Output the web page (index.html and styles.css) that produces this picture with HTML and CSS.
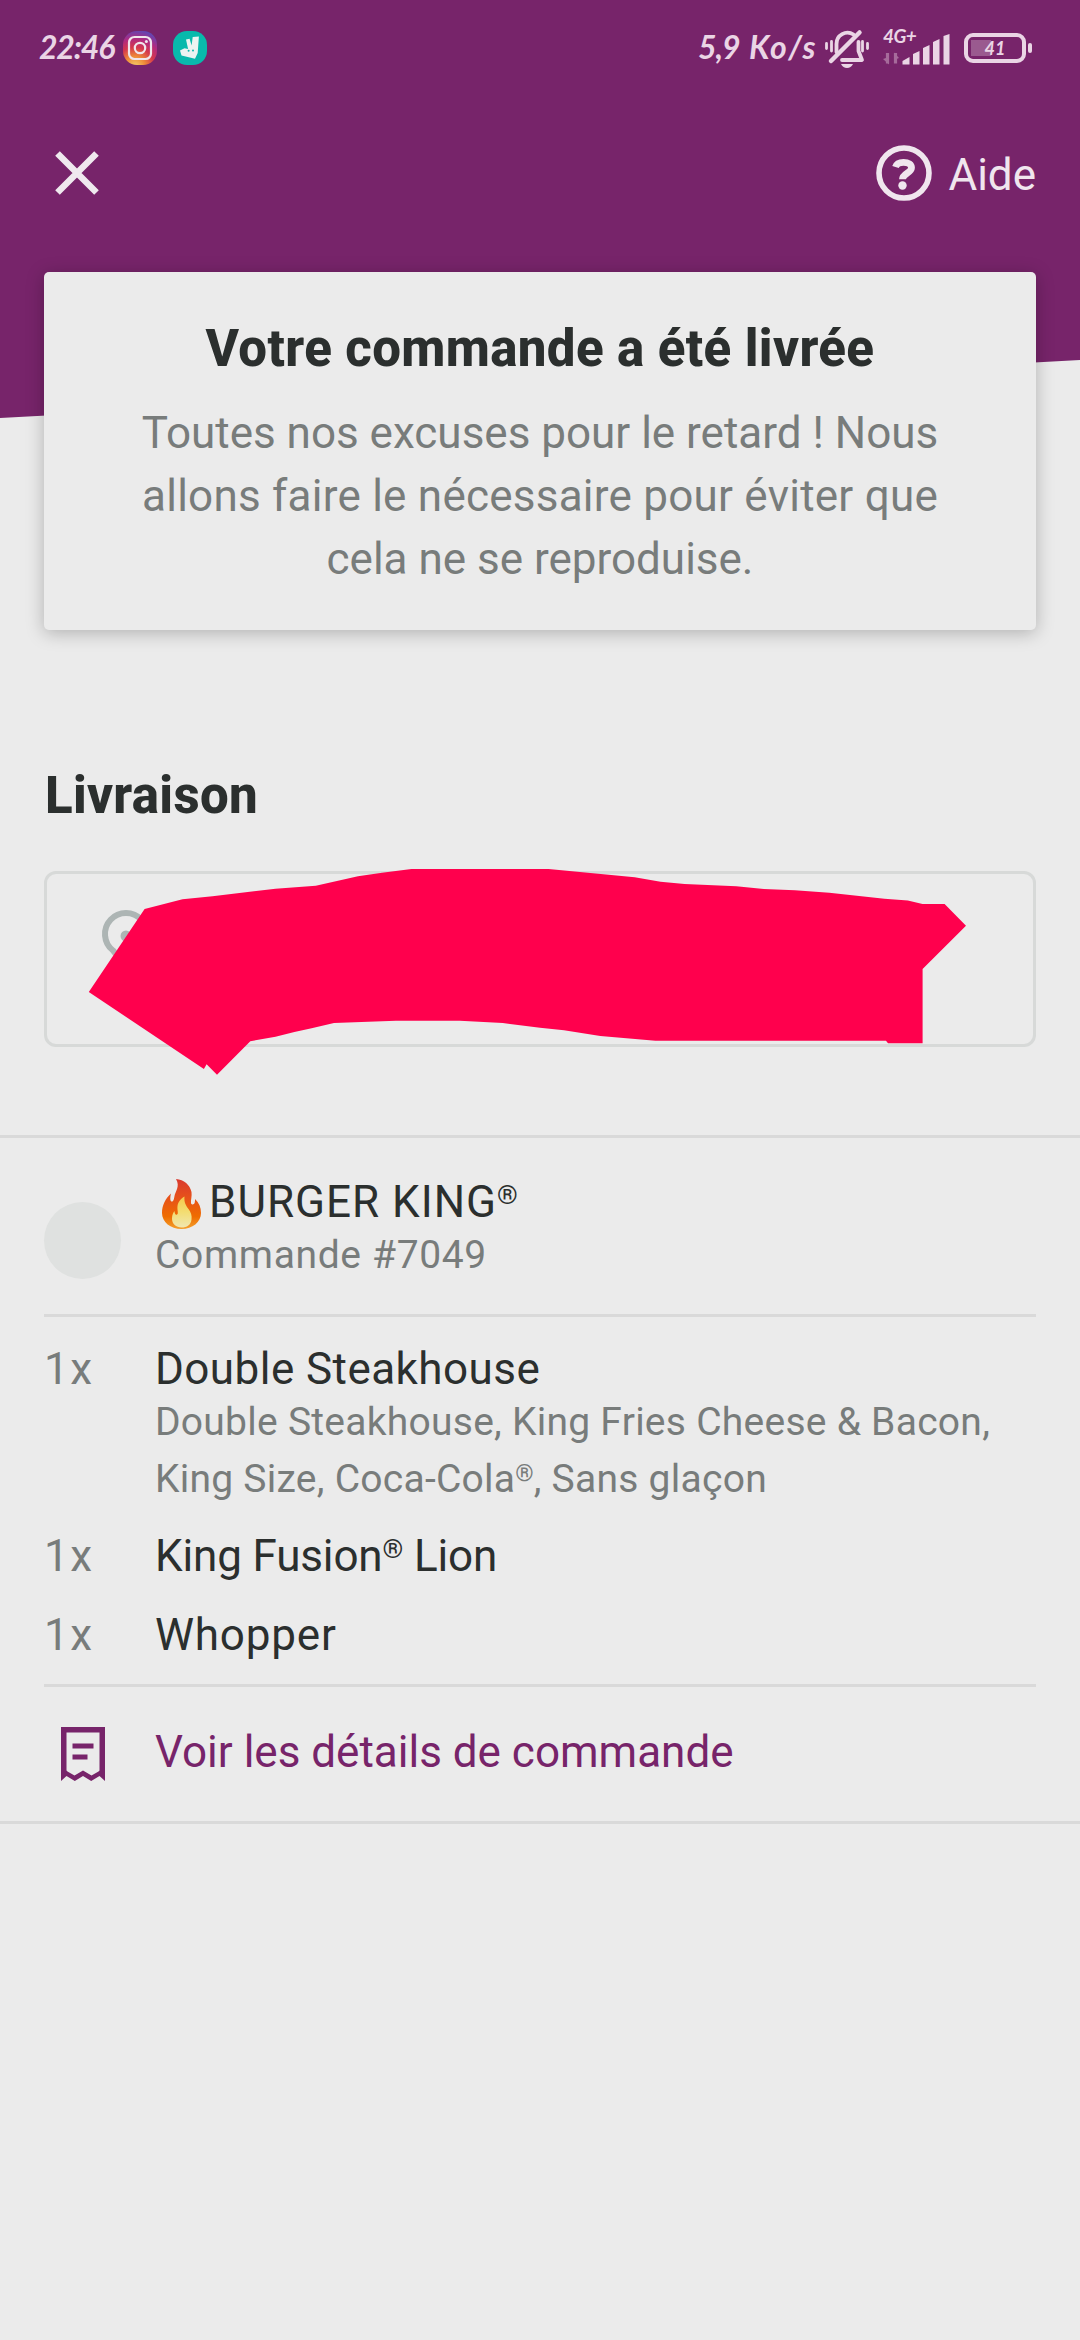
FILE: index.html
```html
<!DOCTYPE html>
<html lang="fr">
<head>
<meta charset="utf-8">
<title>Suivi de commande</title>
<link rel="stylesheet" href="styles.css">
</head>
<body>
<header class="header">
  <div class="status">
    <span class="clock">22:46</span>
    <svg class="app" viewBox="0 0 34 34">
      <defs>
        <radialGradient id="ig" cx=".35" cy="1.05" r="1.1">
          <stop offset="0" stop-color="#f3d06b"/><stop offset=".28" stop-color="#ee8a38"/><stop offset=".52" stop-color="#d5374d"/><stop offset=".75" stop-color="#b02a80"/><stop offset="1" stop-color="#5a48b8"/>
        </radialGradient>
      </defs>
      <rect width="34" height="34" rx="14" fill="url(#ig)"/>
      <rect x="6" y="6" width="22" height="22" rx="5.500" fill="none" stroke="#f0e6ec" stroke-width="2.200"/>
      <circle cx="17" cy="17" r="5.200" fill="none" stroke="#f0e6ec" stroke-width="2.200"/>
      <circle cx="23.400" cy="10.600" r="1.500" fill="#f0e6ec"/>
    </svg>
    <svg class="app app-two" viewBox="0 0 34 34">
      <rect width="34" height="34" rx="14" fill="#08b9ac"/>
      <path d="M13 8.500l3.600-.8 2 6.800 1.100-8.400 6.200-.6-1.200 16.500-2.700 5.800-13.500-3.200-1.500-5.200 4.500-2.200 3.600.8z" fill="#ecf3f1"/>
      <circle cx="15.600" cy="19.800" r="1" fill="#08b9ac"/><circle cx="20" cy="19.400" r="1" fill="#08b9ac"/>
    </svg>
    <span class="rate">5,9</span>
    <span class="unit">Ko/s</span>
    <svg class="bell" viewBox="0 0 44 38" fill="none" stroke="#ead5e5" stroke-linecap="round">
      <path d="M6 31L34.500 2.500" stroke-width="4.500"/>
      <path d="M11.500 22V14a11 11 0 0 1 17-9.500M33.500 12v9l3.500 9H17" stroke-width="3.800" stroke-linejoin="round"/>
      <path d="M16 34h12q-2 4-6 4t-6-4z" fill="#ead5e5" stroke="none"/>
      <path d="M1.500 13.500v5M6.500 11.500v9.500M37.500 11.500v9.500M42.500 13.500v5" stroke-width="2.800"/>
    </svg>
    <div class="net">
      <span class="gen">4G+</span>
      <svg class="bars" viewBox="0 0 67 40">
        <path d="M4.500 19v10.500M12.500 29.500V19" stroke="#a66b9b" stroke-width="3.200"/>
        <path d="M0 25l6 5.500V23zM16 24l-5-5.500V26z" fill="#a66b9b"/>
        <path d="M19.500 30.500v-3.500l7-4v7.500zM30 30.500V20l6.500-3v13.500zM40 30.500V14l6.500-3v19.500zM50 30.500V8l6.500-3v25.500zM60.500 30.500V2l6-2v30.500z" fill="#ead5e5"/>
      </svg>
    </div>
    <div class="battery">41</div>
  </div>
  <nav class="nav">
    <svg class="close" viewBox="0 0 44 44"><path d="M2.500 2.500l39 39M41.500 2.500l-39 39" stroke="#efe9ee" stroke-width="6.500"/></svg>
    <div class="help">
      <svg class="help-icon" viewBox="0 0 56 56"><circle cx="28" cy="28" r="25" fill="none" stroke="#f0e6ee" stroke-width="5.600"/><path d="M19.500 22c1-3.200 4-4.700 8-4.700 5 0 8 2 8 5.500 0 5.200-9 5.500-9 11.500" fill="none" stroke="#f0e6ee" stroke-width="6.800"/><circle cx="26.500" cy="40.500" r="4.200" fill="#f0e6ee"/></svg>
      <span class="aide">Aide</span>
    </div>
  </nav>
</header>

<main>
  <section class="card">
    <h1 class="card-title">Votre commande a été livrée</h1>
    <p class="card-text">Toutes nos excuses pour le retard ! Nous<br><span class="line-wide">allons faire le nécessaire pour éviter que</span><br>cela ne se reproduise.</p>
  </section>

  <h2 class="section-title">Livraison</h2>
  <section class="address">
    <svg class="pin" viewBox="0 0 48 60"><path d="M11 40.500a21 21 0 1 1 26 0L24 56z" fill="none" stroke="#adb5b4" stroke-width="6"/><circle cx="24" cy="26" r="5.500" fill="#adb5b4"/></svg>
    <svg class="scribble" viewBox="44 868 992 208"><polygon fill="#ff004d" points="144.600,909 182.500,899.300 212.500,896.300 275.500,888.700 315.800,885.700 358,876.300 382,872.700 411.500,869 548.600,869 634.700,877.300 660.500,881.700 684.600,884 736.300,886.300 763.800,889 794.800,890.300 829.300,892.700 884.400,898.700 907.800,900.500 922.500,904 944.600,904 966,925.700 922.600,969 922.600,1043.300 888,1043.300 886,1040.700 655.400,1040.700 600.300,1036 564,1030.300 540,1027.700 502.800,1023 459.700,1020.700 396,1020.700 334,1023 311.600,1028.300 294.400,1032 275.500,1036.700 250.300,1041.300 217,1074.700 206.600,1064.300 203.900,1069 88.800,992"/></svg>
  </section>

  <section class="order">
    <div class="restaurant">
      <div class="avatar"></div>
      <div class="restaurant-info">
        <div class="restaurant-name">
          <svg class="fire" viewBox="0 0 39 50">
            <defs>
              <linearGradient id="fo" x1="0" y1="0" x2="0" y2="1"><stop offset="0" stop-color="#d9392f"/><stop offset=".35" stop-color="#e6501b"/><stop offset=".75" stop-color="#ef6c00"/><stop offset="1" stop-color="#f3a02c"/></linearGradient>
              <linearGradient id="fi" x1="0" y1="0" x2="0" y2="1"><stop offset="0" stop-color="#f5c84a"/><stop offset=".5" stop-color="#f3dd72"/><stop offset="1" stop-color="#f0e7b0"/></linearGradient>
            </defs>
            <path d="M14 0c8 .5 14 6 15.500 13 .6 4-.8 8-.5 11 .3 2 3 2 3.700-.2.300-1.500.4-2.500.3-3.800 4 3.500 6 8.500 6 14C39 43 30.500 50 19.500 50S0 43 0 34c0-8 3.500-14.500 9-19.500-1 4-1 7.500.5 8 2 .5 2.500-2.500 3-5.500.5-4 6-9.500 1.500-17z" fill="url(#fo)"/>
            <path d="M22.500 17.500c-.6 6 1.500 9 4 12.500 2.500 3.600 3.500 6 3 10.500-.6 5.500-4.500 8-10 8S10 45 10 39.500c0-3.500 1.300-6 2.500-7.500 0 2 .8 4 2.200 3.700 2.300-.5.300-4.200.8-8.700.5-4 3.500-7.500 7-9.500z" fill="url(#fi)"/>
          </svg>
          <span>BURGER KING<span class="reg">®</span></span>
        </div>
        <div class="restaurant-order">Commande #7049</div>
      </div>
    </div>
    <ul class="items">
      <li class="item">
        <span class="qty">1x</span>
        <div>
          <div class="item-name name-main">Double Steakhouse</div>
          <div class="item-options">Double Steakhouse, King Fries Cheese &amp; Bacon,<br>King Size, Coca-Cola<span class="reg">®</span>, Sans glaçon</div>
        </div>
      </li>
      <li class="item"><span class="qty">1x</span><div class="item-name name-tight">King Fusion<span class="reg">®</span> Lion</div></li>
      <li class="item"><span class="qty">1x</span><div class="item-name name-loose">Whopper</div></li>
    </ul>
    <a class="details">
      <svg class="receipt" viewBox="0 0 44 54"><path d="M0 0h44v54l-5.500-5-8.300 5-8.200-5-8.200 5-8.300-5L0 54z M5.500 5.500v38l1 1 7 4 8.500-5 8.500 5 7-4 1-1v-38z" fill="#77246a" fill-rule="evenodd"/><path d="M11.500 16.500h21v5h-21zM11.500 27.500h15v5h-15z" fill="#77246a"/></svg>
      <span class="details-text">Voir les détails de commande</span>
    </a>
  </section>
</main>
</body>
</html>
```
FILE: styles.css
```css
* { box-sizing: border-box; }
body {
  margin: 0;
  width: 1080px;
  height: 2340px;
  overflow: hidden;
  background: #ebebeb;
  color: #2b2f2e;
  font-family: Roboto, "Noto Sans", sans-serif;
  font-size: 44px;
}
svg { display: block; flex: none; overflow: visible; }

.header {
  height: 418px;
  background: #77246a;
  clip-path: polygon(0 0, 100% 0, 100% 360px, 0 100%);
}
.status {
  display: flex;
  align-items: flex-start;
  height: 96px;
  padding: 31px 48px 0 39px;
  color: #ead5e5;
  font: italic 700 32px/32px Lato, sans-serif;
}
.clock { width: 84px; letter-spacing: -1.2px; }
.app { width: 34px; height: 34px; }
.app-two { margin-left: 16px; }
.rate { width: 51px; margin-left: 491px; letter-spacing: -1px; }
.unit { width: 76px; letter-spacing: 1.6px; }
.bell { width: 44px; height: 38px; margin-top: -1px; }
.net { width: 67px; margin: -5px 14px 0; }
.gen { display: block; height: 8px; font-size: 19px; line-height: 20px; letter-spacing: -.6px; }
.bars { width: 67px; height: 40px; }
.battery {
  position: relative;
  width: 62px;
  height: 30px;
  margin-top: 2px;
  border: 4px solid #ead5e5;
  border-radius: 9px;
  background: linear-gradient(#9a5a8f, #9a5a8f) 3px 3px / 20px 16px no-repeat;
  font-size: 18px;
  line-height: 22px;
  text-align: center;
}
.battery::after {
  content: "";
  position: absolute;
  left: 60px;
  top: 6px;
  width: 4px;
  height: 10px;
  border-radius: 2px;
  background: #ead5e5;
}
.nav {
  display: flex;
  justify-content: space-between;
  align-items: center;
  height: 154px;
  padding: 0 44px 0 55px;
}
.close { width: 44px; height: 44px; }
.help { display: flex; align-items: center; gap: 16px; color: #f0e6ee; }
.help-icon { width: 56px; height: 56px; }
.aide { padding-top: 3px; line-height: 52px; }

.card {
  position: relative;
  width: 992px;
  height: 358px;
  margin: -146px auto 0;
  padding-top: 44px;
  border-radius: 5px;
  background: #ebebeb;
  box-shadow: 0 3px 18px rgba(0, 0, 0, .25);
  text-align: center;
}
.card-title { margin: 0; font-size: 51px; font-weight: 800; line-height: 66px; letter-spacing: .38px; }
.card-text { margin: 20px 0 0; color: #787c7b; line-height: 63px; }
.line-wide { letter-spacing: .24px; }

.section-title { margin: 133px 44px 0; padding-left: 1px; font-size: 51px; font-weight: 800; line-height: 66px; letter-spacing: .3px; }
.address {
  position: relative;
  height: 176px;
  margin: 42px 44px 0;
  border: 3px solid #d7d9d8;
  border-radius: 12px;
}
.pin { width: 48px; height: 60px; margin: 36px 0 0 55px; }
.scribble { position: absolute; left: -3px; top: -6px; width: 992px; height: 208px; }

.order { margin-top: 88px; border: solid #d9d9d9; border-width: 3px 0; padding: 0 44px; }
.restaurant { display: flex; gap: 34px; height: 179px; padding-top: 37px; border-bottom: 3px solid #d9d9d9; }
.avatar { width: 77px; height: 77px; margin-top: 27px; border-radius: 50%; background: #dfe1e0; }
.restaurant-name { display: flex; align-items: center; gap: 8px; height: 54px; line-height: 54px; padding-left: 7px; letter-spacing: 1px; }
.fire { width: 39px; height: 50px; margin-top: 4px; }
.reg { font-size: .6em; line-height: 0; vertical-align: .48em; letter-spacing: 0; }
.restaurant-order, .item-options { color: #787c7b; font-size: 39px; line-height: 57px; letter-spacing: .26px; }
.restaurant-order { margin-top: -2px; letter-spacing: .65px; }
.items { margin: 0; padding: 23px 0 0; border-bottom: 3px solid #d9d9d9; list-style: none; }
.item { display: grid; grid-template-columns: 111px 1fr; line-height: 58px; padding-bottom: 21px; }
.item:last-child { padding-bottom: 20px; }
.item-options { margin: -4px 0 -2px; }
.name-main { letter-spacing: .45px; }
.name-tight { letter-spacing: -.15px; }
.name-loose { letter-spacing: .8px; }
.qty { color: #787c7b; letter-spacing: 1.5px; }
.details { display: flex; align-items: center; height: 134px; color: #77246a; }
.details-text { padding-bottom: 5px; }
.receipt { width: 44px; height: 54px; margin: 0 50px 0 17px; }
```
